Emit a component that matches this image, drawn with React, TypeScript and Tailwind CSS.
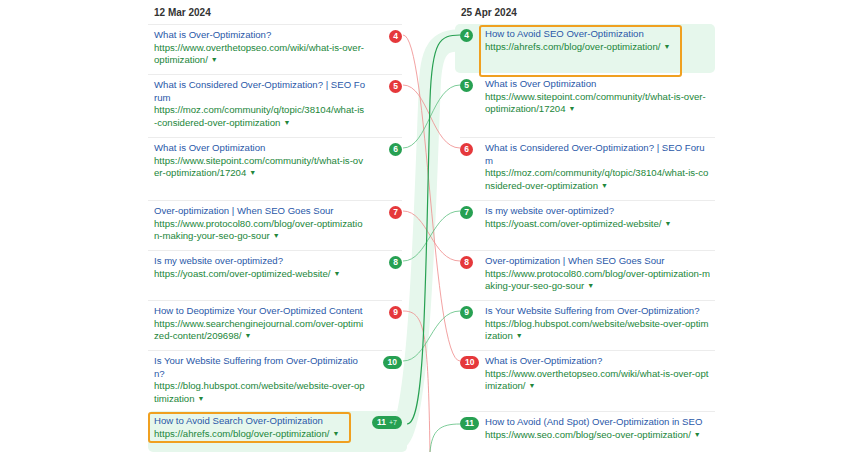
import React from "react";

type Item = { t: string[]; u: string[]; n: string; c: "r" | "g"; hl?: boolean; extra?: string };
const H = [50, 63, 63, 50, 50, 50, 61, 41];

const L: Item[] = [
  { t: ["What is Over-Optimization?"], u: ["https://www.overthetopseo.com/wiki/what-is-over-", "optimization/"], n: "4", c: "r" },
  { t: ["What is Considered Over-Optimization? | SEO Fo", "rum"], u: ["https://moz.com/community/q/topic/38104/what-is", "-considered-over-optimization"], n: "5", c: "r" },
  { t: ["What is Over Optimization"], u: ["https://www.sitepoint.com/community/t/what-is-ov", "er-optimization/17204"], n: "6", c: "g" },
  { t: ["Over-optimization | When SEO Goes Sour"], u: ["https://www.protocol80.com/blog/over-optimizatio", "n-making-your-seo-go-sour"], n: "7", c: "r" },
  { t: ["Is my website over-optimized?"], u: ["https://yoast.com/over-optimized-website/"], n: "8", c: "g" },
  { t: ["How to Deoptimize Your Over-Optimized Content"], u: ["https://www.searchenginejournal.com/over-optimi", "zed-content/209698/"], n: "9", c: "r" },
  { t: ["Is Your Website Suffering from Over-Optimizatio", "n?"], u: ["https://blog.hubspot.com/website/website-over-op", "timization"], n: "10", c: "g" },
  { t: ["How to Avoid Search Over-Optimization"], u: ["https://ahrefs.com/blog/over-optimization/"], n: "11", c: "g", hl: true, extra: "+7" },
];
const R: Item[] = [
  { t: ["How to Avoid SEO Over-Optimization"], u: ["https://ahrefs.com/blog/over-optimization/"], n: "4", c: "g", hl: true },
  { t: ["What is Over Optimization"], u: ["https://www.sitepoint.com/community/t/what-is-over-", "optimization/17204"], n: "5", c: "g" },
  { t: ["What is Considered Over-Optimization? | SEO Foru", "m"], u: ["https://moz.com/community/q/topic/38104/what-is-co", "nsidered-over-optimization"], n: "6", c: "r" },
  { t: ["Is my website over-optimized?"], u: ["https://yoast.com/over-optimized-website/"], n: "7", c: "g" },
  { t: ["Over-optimization | When SEO Goes Sour"], u: ["https://www.protocol80.com/blog/over-optimization-m", "aking-your-seo-go-sour"], n: "8", c: "r" },
  { t: ["Is Your Website Suffering from Over-Optimization?"], u: ["https://blog.hubspot.com/website/website-over-optim", "ization"], n: "9", c: "g" },
  { t: ["What is Over-Optimization?"], u: ["https://www.overthetopseo.com/wiki/what-is-over-opt", "imization/"], n: "10", c: "r" },
  { t: ["How to Avoid (And Spot) Over-Optimization in SEO"], u: ["https://www.seo.com/blog/seo-over-optimization/"], n: "11", c: "g" },
];

const Badge = ({ it }: { it: Item }) => (
  <span className={`shrink-0 h-[13px] min-w-[13px] rounded-full inline-flex items-center justify-center text-[8.5px] font-bold text-white leading-none ${it.c === "r" ? "bg-[#e5383b]" : "bg-[#27a052]"} ${it.n.length > 1 ? "px-[5px]" : "px-[3px]"}`}>
    {it.n}
    {it.extra && <span className="ml-[3px] font-normal text-[7px] text-green-100">{it.extra}</span>}
  </span>
);

const Text = ({ it }: { it: Item }) => (
  <div className={`text-[9.6px] leading-[12.5px] ${it.hl ? "border-2 border-[#f0a020] rounded-[3px] pl-[4px] pr-[10px] py-[1px] -ml-[6px] -my-[3px] w-fit" : ""}`}>
    {it.t.map((s, i) => <div key={i} className="text-[#2a58a8] whitespace-nowrap">{s}</div>)}
    {it.u.map((s, i) => (
      <div key={i} className="text-[#22863a] whitespace-nowrap">
        {s}
        {i === it.u.length - 1 && <span className="text-[7px] ml-[3px] align-middle">▼</span>}
      </div>
    ))}
  </div>
);

const ys = [35, 85, 148, 211, 261, 311, 361, 424];
const curve = (y1: number, y2: number) => `M403 ${y1} C428 ${y1}, 432 ${y2}, 460 ${y2}`;

export default function App() {
  return (
    <div className="relative w-[860px] h-[452px] bg-white overflow-hidden" style={{ fontFamily: '"Liberation Sans", Arial, sans-serif' }}>
      <svg className="absolute left-0 top-0" width="860" height="452">
        <path d="M395 440 C420 440, 425 200, 430 80 C433 40, 445 40, 470 40" stroke="#e6f7ec" strokeWidth="22" fill="none" />
        <rect x="148" y="411" width="259" height="41" rx="5" fill="#e6f7ec" />
        <rect x="455" y="24" width="260" height="49" rx="5" fill="#e6f7ec" />
      </svg>
      <div className="relative ml-[148px] w-[567px]">
        <div className="h-[24px] flex items-center text-[10px] font-bold text-[#333]">
          <div className="w-[312px] pl-[6px]">12 Mar 2024</div>
          <div className="pl-[1px]">25 Apr 2024</div>
        </div>
        {H.map((h, i) => (
          <div key={i} className="flex" style={{ height: h }}>
            <div className={`w-[254px] flex pl-[6px] pt-[4px] ${L[i].hl ? "" : "border-t border-[#ececec]"}`}>
              <div className="flex-1 min-w-0"><Text it={L[i]} /></div>
              <div className="pt-[1px] flex"><Badge it={L[i]} /></div>
            </div>
            <div className="w-[58px] shrink-0" />
            <div className={`flex-1 flex pt-[4px] ${R[i].hl || i === 1 ? "" : "border-t border-[#ececec]"}`}>
              <div className="w-[25px] shrink-0 pt-[1px] flex"><Badge it={R[i]} /></div>
              <Text it={R[i]} />
            </div>
          </div>
        ))}
      </div>
      <svg className="absolute left-0 top-0 pointer-events-none" width="860" height="452" fill="none" strokeWidth="0.8">
        <path d={curve(ys[0], ys[6])} stroke="#ef8a8a" />
        <path d={curve(ys[1], ys[2])} stroke="#ef8a8a" />
        <path d={curve(ys[3], ys[4])} stroke="#ef8a8a" />
        <path d="M403 311 C425 311, 428 330, 430 452" stroke="#ef8a8a" />
        <path d={curve(ys[2], ys[1])} stroke="#5cbf7f" />
        <path d={curve(ys[4], ys[3])} stroke="#5cbf7f" />
        <path d={curve(ys[6], ys[5])} stroke="#5cbf7f" />
        <path d="M430 452 C432 430, 440 424, 460 424" stroke="#5cbf7f" />
        <path d="M407 424 C425 424, 425 300, 430 100 C432 40, 440 35, 460 35" stroke="#27a052" strokeWidth="1.2" />
      </svg>
    </div>
  );
}
